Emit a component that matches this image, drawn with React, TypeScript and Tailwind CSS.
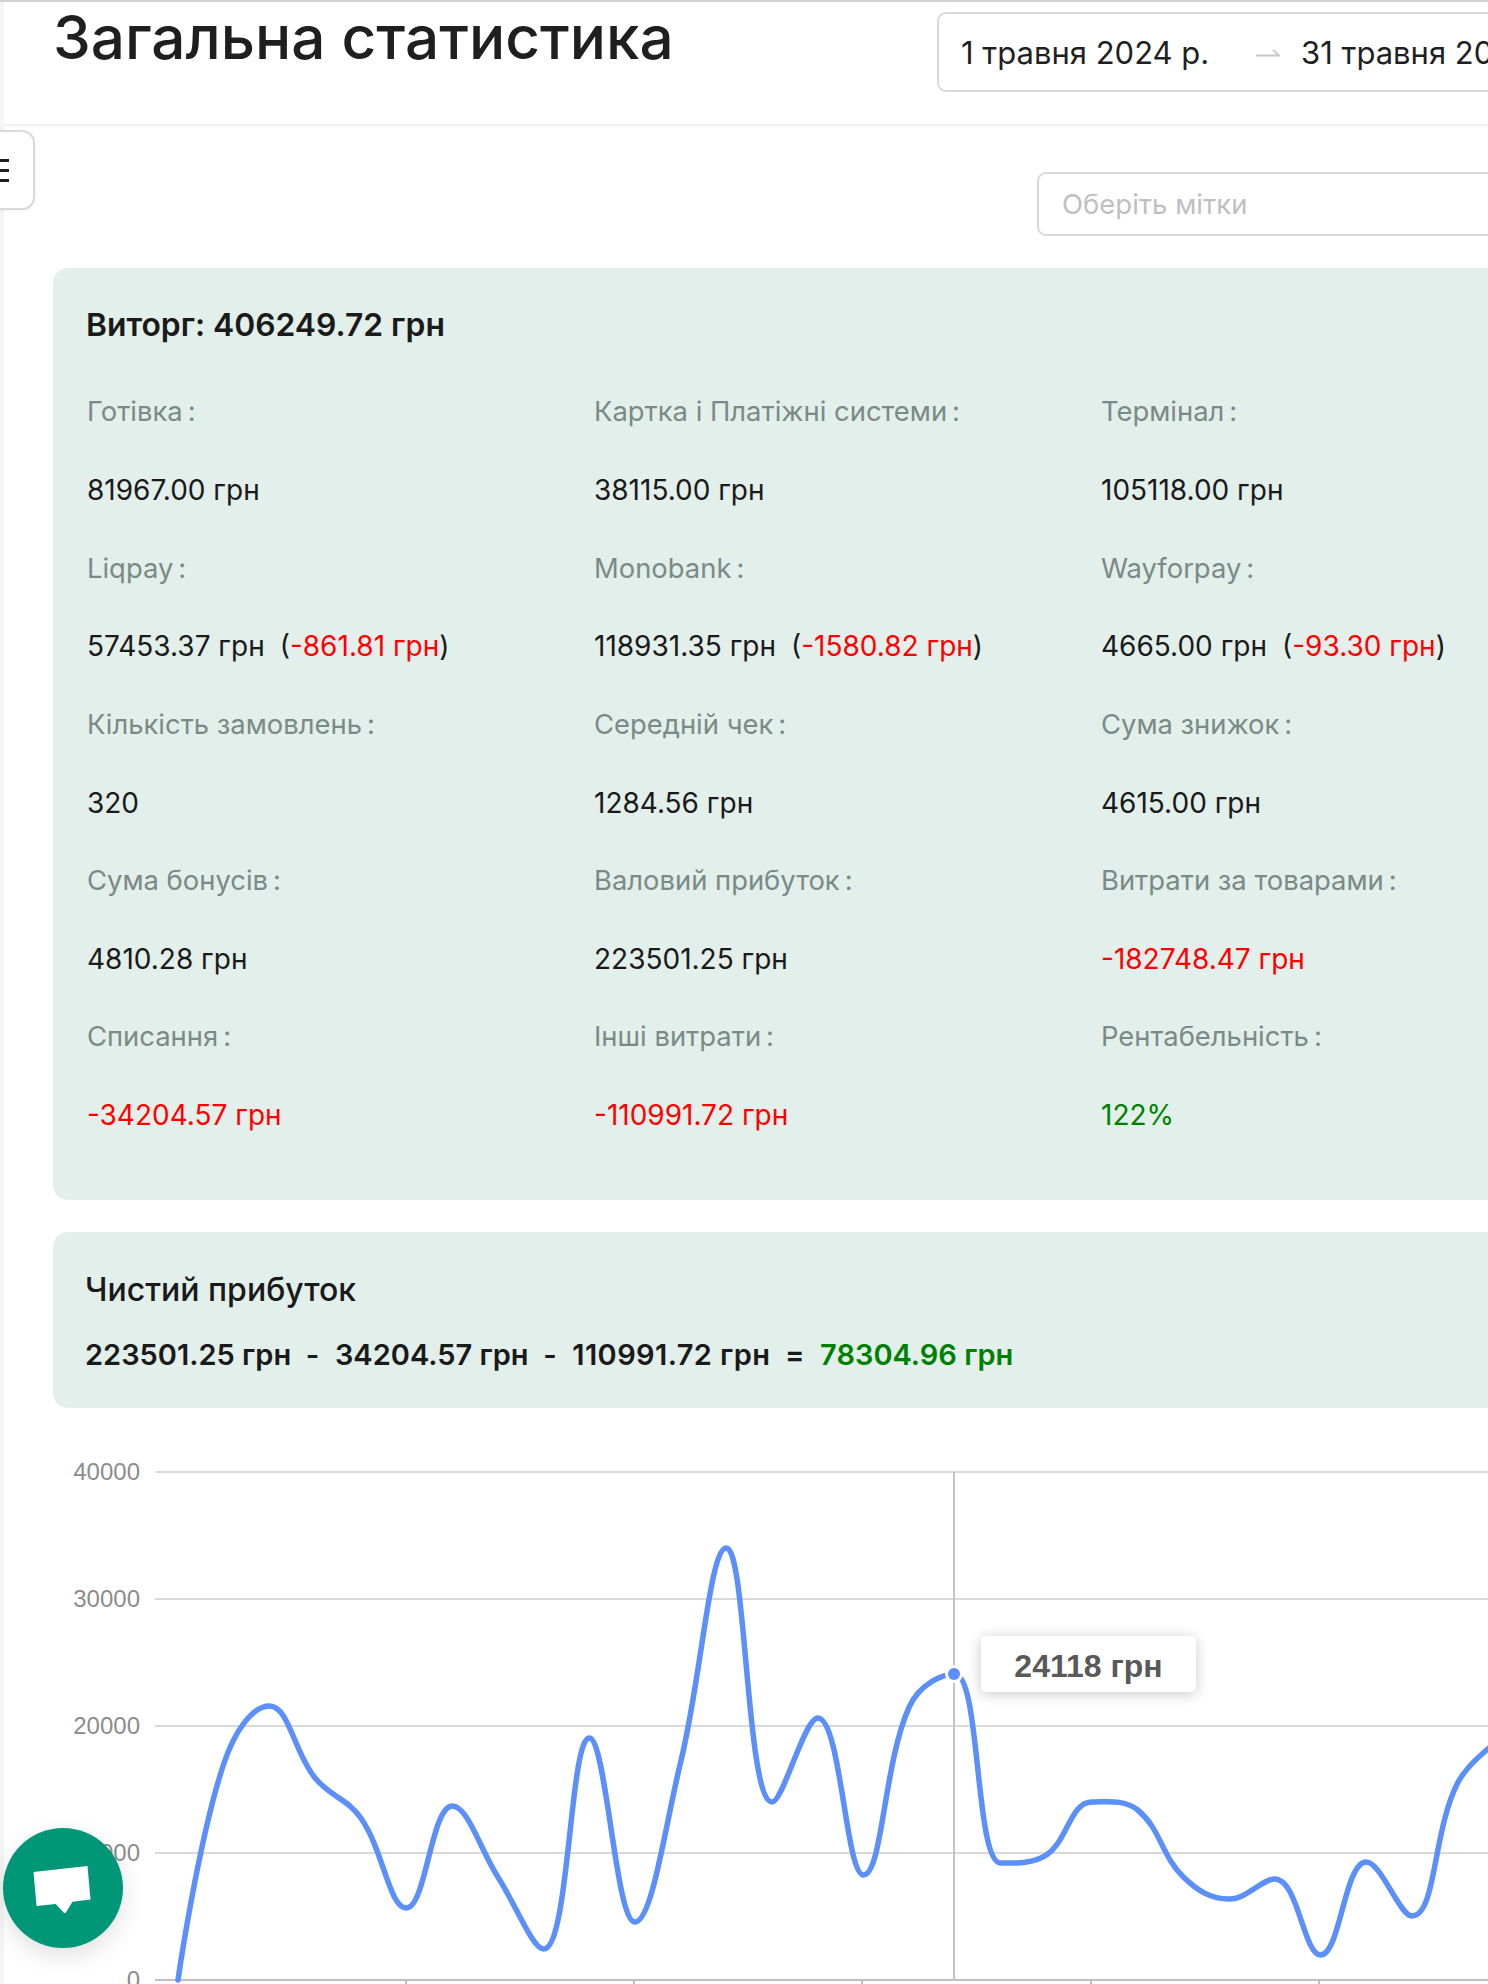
import React from 'react';

type Stat = { label: string; value: string; fee?: string; tone?: 'red' | 'green' };

const stats: Stat[] = [
  { label: 'Готівка', value: '81967.00 грн' },
  { label: 'Картка і Платіжні системи', value: '38115.00 грн' },
  { label: 'Термінал', value: '105118.00 грн' },
  { label: 'Liqpay', value: '57453.37 грн', fee: '-861.81 грн' },
  { label: 'Monobank', value: '118931.35 грн', fee: '-1580.82 грн' },
  { label: 'Wayforpay', value: '4665.00 грн', fee: '-93.30 грн' },
  { label: 'Кількість замовлень', value: '320' },
  { label: 'Середній чек', value: '1284.56 грн' },
  { label: 'Сума знижок', value: '4615.00 грн' },
  { label: 'Сума бонусів', value: '4810.28 грн' },
  { label: 'Валовий прибуток', value: '223501.25 грн' },
  { label: 'Витрати за товарами', value: '-182748.47 грн', tone: 'red' },
  { label: 'Списання', value: '-34204.57 грн', tone: 'red' },
  { label: 'Інші витрати', value: '-110991.72 грн', tone: 'red' },
  { label: 'Рентабельність', value: '122%', tone: 'green' },
];

// y of each daily point, in page pixels
const lineY = [
  1980, 1764, 1706, 1778, 1818, 1908, 1806, 1877, 1949, 1738, 1922, 1762, 1548, 1802, 1718,
  1875, 1707, 1674, 1863, 1855, 1802, 1810, 1877, 1899, 1879, 1955, 1862, 1916, 1783, 1737,
];
const startX = 178;
const stepX = 45.7;
const smooth = 0.4;

// catmull-rom weighted by segment length, flat at peaks and valleys
const buildLine = () => {
  const pts = lineY.map((y, i) => [startX + i * stepX, y]);
  const handles = pts.map((p, i) => {
    if (i === 0 || i === pts.length - 1) return { inX: p[0], inY: p[1], outX: p[0], outY: p[1] };
    const prev = pts[i - 1];
    const next = pts[i + 1];
    const vx = next[0] - prev[0];
    const vy = next[1] - prev[1];
    const d0 = Math.hypot(p[0] - prev[0], p[1] - prev[1]);
    const d1 = Math.hypot(next[0] - p[0], next[1] - p[1]);
    const w0 = Math.max(0.3, Math.min(0.7, d0 / (d0 + d1)));
    const w1 = 1 - w0;
    const extreme = (p[1] - prev[1]) * (next[1] - p[1]) <= 0;
    return {
      inX: p[0] - vx * w0 * smooth,
      inY: extreme ? p[1] : p[1] - vy * w0 * smooth,
      outX: p[0] + vx * w1 * smooth,
      outY: extreme ? p[1] : p[1] + vy * w1 * smooth,
    };
  });
  let d = `M${pts[0][0]} ${pts[0][1]}`;
  for (let i = 0; i < pts.length - 1; i++) {
    const a = handles[i];
    const b = handles[i + 1];
    const [x1, y1] = pts[i + 1];
    d += ` C${a.outX} ${a.outY} ${b.inX} ${b.inY} ${x1} ${y1}`;
  }
  return d;
};

const gridRows = [
  { y: 1472, label: '40000' },
  { y: 1599, label: '30000' },
  { y: 1726, label: '20000' },
  { y: 1853, label: '10000' },
  { y: 1980, label: '0' },
];
const ticks = [406, 634, 862, 1091, 1319];

const StatCell = ({ stat }: { stat: Stat }) => (
  <>
    <div className="flex items-center text-[27.4px] text-[#7b8a86]">
      {stat.label}
      <span className="ml-[5px]">:</span>
    </div>
    <div
      className={
        stat.tone === 'red'
          ? 'flex items-center text-[#ff0000]'
          : stat.tone === 'green'
            ? 'flex items-center text-[#008000]'
            : 'flex items-center text-[#1a1a1a]'
      }
    >
      {stat.value}
      {stat.fee && (
        <span className="ml-[15px]">
          (<span className="text-[#ff0000]">{stat.fee}</span>)
        </span>
      )}
    </div>
  </>
);

const Chart = () => (
  <div className="relative mt-[32px] h-[544px] w-[1484px]">
    <svg className="block" width="1484" height="544" viewBox="4 1440 1484 544">
      {gridRows.map((row) => (
        <g key={row.label}>
          <line
            x1="155"
            x2="1488"
            y1={row.y}
            y2={row.y}
            stroke={row.label === '0' ? '#bfbfbf' : '#d9d9d9'}
            strokeWidth="2"
          />
          <text
            x="140"
            y={row.y + 7.5}
            textAnchor="end"
            fill="#8c8c8c"
            className="font-['Liberation_Sans',sans-serif] text-[24px]"
          >
            {row.label}
          </text>
        </g>
      ))}
      {ticks.map((x) => (
        <line key={x} x1={x} x2={x} y1="1980" y2="1984" stroke="#bfbfbf" strokeWidth="2" />
      ))}
      <line x1="954" x2="954" y1="1472" y2="1980" stroke="#c4c4c4" strokeWidth="2" />
      <path d={buildLine()} fill="none" stroke="#5b8ff9" strokeWidth="5.5" strokeLinecap="round" />
      <circle cx="954" cy="1674" r="9" fill="#ffffff" />
      <circle cx="954" cy="1674" r="6" fill="#5b8ff9" />
    </svg>
    <div className="absolute left-[977px] top-[196px] flex h-[56px] w-[215px] items-center justify-center rounded-[5px] bg-white pt-[3px] font-['Liberation_Sans',sans-serif] text-[32px] font-bold text-[#595959] shadow-[0_2px_14px_rgba(0,0,0,0.22)]">
      24118 грн
    </div>
  </div>
);

export default function App() {
  return (
    <div className="relative flex h-[1984px] w-[1488px] overflow-hidden border-t-2 border-[#d0d0d0] bg-white font-['Inter',sans-serif]">
      <aside className="w-[4px] shrink-0 bg-[#f5f5f5]" />

      <main className="w-[1800px] shrink-0">
        <header className="flex h-[124px] border-b-2 border-[#f0f0f0]">
          <h1 className="ml-[49px] mt-[2px] w-[884px] shrink-0 text-[60.25px] font-medium leading-[68px] text-[#1f1f1f]">
            Загальна статистика
          </h1>
          <div className="mt-[10px] flex h-[80px] w-[700px] items-center rounded-[9px] border-2 border-[#d9d9d9] pl-[22px] pt-[2px] text-[31px] text-[#1f1f1f]">
            <span className="w-[295px]">1 травня 2024 р.</span>
            <svg className="w-[24px]" width="24" height="10" viewBox="0 0 24 10" fill="none">
              <path d="M0 7.5h23L17 2" stroke="#c8c8c8" strokeWidth="1.8" />
            </svg>
            <span className="ml-[21px]">31 травня 2024 р.</span>
          </div>
        </header>

        <div className="ml-[1033px] mt-[46px] flex h-[64px] w-[600px] items-center rounded-[9px] border-2 border-[#d9d9d9] pl-[23px] pt-[1px] text-[27.5px] text-[#bfbfbf]">
          Оберіть мітки
        </div>

        <section className="ml-[49px] mt-[32px] h-[932px] rounded-[15px] bg-[#e2efea] pl-[34px] pt-[34px]">
          <h2 className="-ml-[1px] h-[46px] text-[31.8px] font-semibold leading-[46px] text-[#1a1a1a]">
            Виторг: 406249.72 грн
          </h2>
          <div className="mt-[25px] grid grid-flow-col grid-cols-[507px_507px_507px] grid-rows-[repeat(10,78.1px)] text-[28px]">
            {[0, 1, 2].map((col) =>
              stats
                .filter((_, i) => i % 3 === col)
                .map((stat) => <StatCell key={stat.label} stat={stat} />),
            )}
          </div>
        </section>

        <section className="ml-[49px] mt-[32px] h-[176px] rounded-[15px] bg-[#e2efea] pl-[32px] pt-[35px]">
          <h2 className="h-[46px] text-[32px] font-medium leading-[46px] text-[#1a1a1a]">Чистий прибуток</h2>
          <p className="mt-[22px] h-[40px] text-[29px] font-semibold leading-[40px] text-[#1a1a1a] whitespace-pre">
            223501.25 грн{'  -  '}
            <span className="ml-[1px]">34204.57 грн</span>
            {'  -  '}
            <span className="ml-[1px] tracking-[0.4px]">110991.72 грн</span>
            {'  =  '}
            <span className="ml-[1px] text-[#008000]">78304.96 грн</span>
          </p>
        </section>

        <Chart />
      </main>

      <button className="absolute left-[-20px] top-[128px] flex h-[80px] w-[55px] flex-col items-end justify-center gap-[7px] rounded-[13px] border-2 border-[#d9d9d9] bg-white pr-[24px] shadow-[0_1px_4px_rgba(0,0,0,0.06)]">
        <span className="h-[3px] w-[9px] bg-[#1f1f1f]" />
        <span className="h-[3px] w-[9px] bg-[#1f1f1f]" />
        <span className="h-[3px] w-[9px] bg-[#1f1f1f]" />
      </button>

      <button className="absolute left-[3px] top-[1826px] flex h-[120px] w-[120px] items-center justify-center rounded-full bg-[#009678] shadow-[0_8px_24px_rgba(0,0,0,0.12)]">
        <svg width="60" height="50" viewBox="33 83 60 50">
          <path d="M33.5 92L87.5 86L90.5 119.500L72.500 121.700L65 134L55.700 124L36.500 126Z" fill="#ffffff" />
        </svg>
      </button>
    </div>
  );
}
